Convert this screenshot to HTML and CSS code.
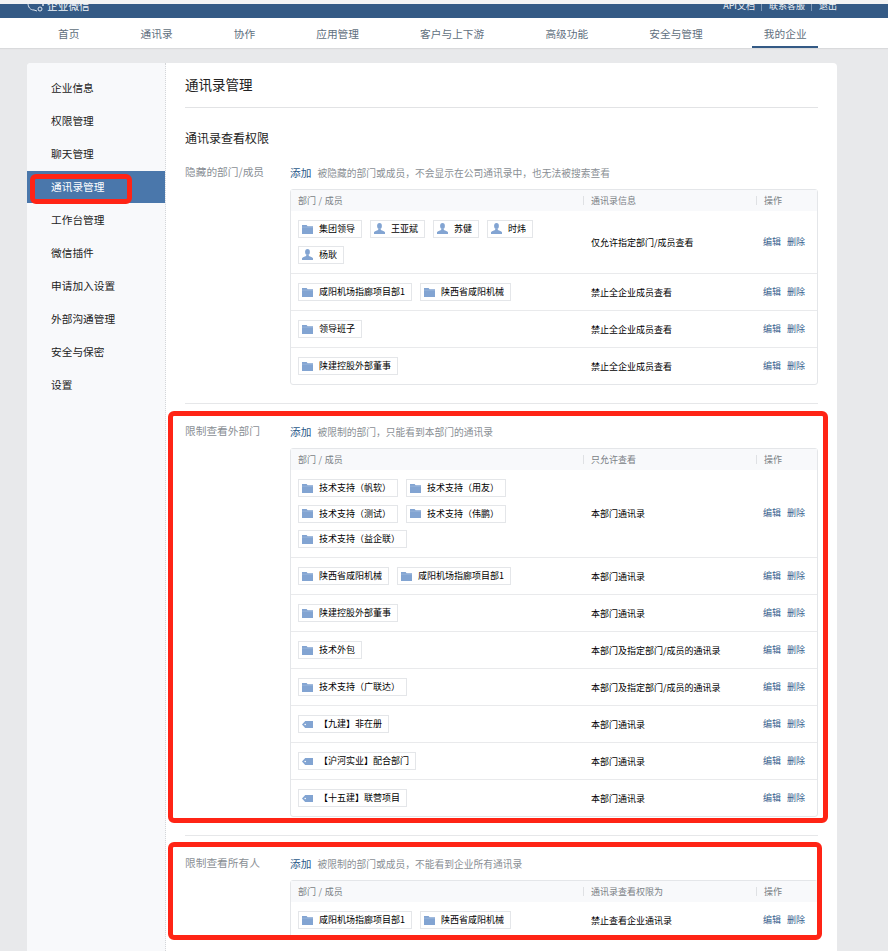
FILE: index.html
```html
<!DOCTYPE html>
<html lang="zh-CN">
<head>
<meta charset="utf-8">
<title>通讯录管理</title>
<link rel="stylesheet" href="styles.css">
</head>
<body>
<svg class="defs" width="0" height="0" aria-hidden="true">
  <symbol id="i-folder" viewBox="0 0 11 9"><path d="M0 0h4.600l1 1.300H11V9H0z" fill="#82a4d2"/><path d="M0 2.200h11" stroke="#a5bfe0" stroke-width=".6"/></symbol>
  <symbol id="i-user" viewBox="0 0 11 11"><ellipse cx="5.500" cy="2.900" rx="2.400" ry="2.900" fill="#82a4d2"/><path d="M4.400 5.600h2.200l.3 1.300c1.600.6 3.400 1.200 4.100 2.400V11H0V9.300c.7-1.200 2.500-1.800 4.100-2.400z" fill="#82a4d2"/></symbol>
  <symbol id="i-tag" viewBox="0 0 11 7"><path d="M3.200 0H11v7H3.200L0 3.500z" fill="#82a4d2"/><circle cx="3.200" cy="3.500" r=".8" fill="#fff"/></symbol>
</svg>

<div class="top-band"></div>
<header class="topbar">
  <div class="brand">
    <svg class="brand-icon" viewBox="0 0 18 12" aria-hidden="true"><path d="M1 1c0 4 2 7 6 7l3 1" fill="none" stroke="#dfe6ef" stroke-width="1"/><circle cx="13" cy="7" r="2" fill="none" stroke="#dfe6ef"/><circle cx="16" cy="3" r="1" fill="#dfe6ef"/></svg>
    <span>企业微信</span>
  </div>
  <nav class="toplinks"><a>API文档</a><i></i><a>联系客服</a><i></i><a>退出</a></nav>
</header>
<nav class="mainnav">
  <a>首页</a><a>通讯录</a><a>协作</a><a>应用管理</a><a>客户与上下游</a><a>高级功能</a><a>安全与管理</a><a class="on">我的企业</a>
</nav>

<div class="page">
  <div class="card">
    <aside class="side">
      <a>企业信息</a><a>权限管理</a><a>聊天管理</a><a class="on">通讯录管理</a><a>工作台管理</a><a>微信插件</a><a>申请加入设置</a><a>外部沟通管理</a><a>安全与保密</a><a>设置</a>
    </aside>
    <main class="content">
      <h1 class="title">通讯录管理</h1>
      <h2 class="subtitle">通讯录查看权限</h2>

      <section class="sec first">
        <div class="sec-label">隐藏的部门/成员</div>
        <div class="sec-body">
          <div class="sec-head"><a class="add">添加</a><span class="desc">被隐藏的部门或成员，不会显示在公司通讯录中，也无法被搜索查看</span></div>
          <div class="tbl">
            <div class="row head"><div class="h1">部门 / 成员</div><div class="hc"><span>通讯录信息</span></div><div class="hc"><span>操作</span></div></div>
            <div class="row">
              <div class="tags">
                <span class="tag"><svg class="ic f"><use href="#i-folder"/></svg>集团领导</span>
                <span class="tag"><svg class="ic u"><use href="#i-user"/></svg>王亚斌</span>
                <span class="tag"><svg class="ic u"><use href="#i-user"/></svg>苏健</span>
                <span class="tag"><svg class="ic u"><use href="#i-user"/></svg>时炜</span>
                <span class="tag"><svg class="ic u"><use href="#i-user"/></svg>杨耿</span>
              </div>
              <div class="info">仅允许指定部门/成员查看</div>
              <div class="ops"><a>编辑</a><a>删除</a></div>
            </div>
            <div class="row">
              <div class="tags">
                <span class="tag"><svg class="ic f"><use href="#i-folder"/></svg>咸阳机场指廊项目部1</span>
                <span class="tag"><svg class="ic f"><use href="#i-folder"/></svg>陕西省咸阳机械</span>
              </div>
              <div class="info">禁止全企业成员查看</div>
              <div class="ops"><a>编辑</a><a>删除</a></div>
            </div>
            <div class="row">
              <div class="tags"><span class="tag"><svg class="ic f"><use href="#i-folder"/></svg>领导班子</span></div>
              <div class="info">禁止全企业成员查看</div>
              <div class="ops"><a>编辑</a><a>删除</a></div>
            </div>
            <div class="row">
              <div class="tags"><span class="tag"><svg class="ic f"><use href="#i-folder"/></svg>陕建控股外部董事</span></div>
              <div class="info">禁止全企业成员查看</div>
              <div class="ops"><a>编辑</a><a>删除</a></div>
            </div>
          </div>
        </div>
      </section>

      <section class="sec">
        <div class="sec-label">限制查看外部门</div>
        <div class="sec-body">
          <div class="sec-head"><a class="add">添加</a><span class="desc">被限制的部门，只能看到本部门的通讯录</span></div>
          <div class="tbl">
            <div class="row head"><div class="h1">部门 / 成员</div><div class="hc"><span>只允许查看</span></div><div class="hc"><span>操作</span></div></div>
            <div class="row">
              <div class="tags three">
                <span class="tag"><svg class="ic f"><use href="#i-folder"/></svg>技术支持（帆软）</span>
                <span class="tag"><svg class="ic f"><use href="#i-folder"/></svg>技术支持（用友）</span>
                <span class="tag"><svg class="ic f"><use href="#i-folder"/></svg>技术支持（测试）</span>
                <span class="tag"><svg class="ic f"><use href="#i-folder"/></svg>技术支持（伟鹏）</span>
                <span class="tag"><svg class="ic f"><use href="#i-folder"/></svg>技术支持（益企联）</span>
              </div>
              <div class="info">本部门通讯录</div>
              <div class="ops"><a>编辑</a><a>删除</a></div>
            </div>
            <div class="row">
              <div class="tags">
                <span class="tag"><svg class="ic f"><use href="#i-folder"/></svg>陕西省咸阳机械</span>
                <span class="tag"><svg class="ic f"><use href="#i-folder"/></svg>咸阳机场指廊项目部1</span>
              </div>
              <div class="info">本部门通讯录</div>
              <div class="ops"><a>编辑</a><a>删除</a></div>
            </div>
            <div class="row">
              <div class="tags"><span class="tag"><svg class="ic f"><use href="#i-folder"/></svg>陕建控股外部董事</span></div>
              <div class="info">本部门通讯录</div>
              <div class="ops"><a>编辑</a><a>删除</a></div>
            </div>
            <div class="row">
              <div class="tags"><span class="tag"><svg class="ic f"><use href="#i-folder"/></svg>技术外包</span></div>
              <div class="info">本部门及指定部门/成员的通讯录</div>
              <div class="ops"><a>编辑</a><a>删除</a></div>
            </div>
            <div class="row">
              <div class="tags"><span class="tag"><svg class="ic f"><use href="#i-folder"/></svg>技术支持（广联达）</span></div>
              <div class="info">本部门及指定部门/成员的通讯录</div>
              <div class="ops"><a>编辑</a><a>删除</a></div>
            </div>
            <div class="row">
              <div class="tags"><span class="tag"><svg class="ic t"><use href="#i-tag"/></svg>【九建】非在册</span></div>
              <div class="info">本部门通讯录</div>
              <div class="ops"><a>编辑</a><a>删除</a></div>
            </div>
            <div class="row">
              <div class="tags"><span class="tag"><svg class="ic t"><use href="#i-tag"/></svg>【沪河实业】配合部门</span></div>
              <div class="info">本部门通讯录</div>
              <div class="ops"><a>编辑</a><a>删除</a></div>
            </div>
            <div class="row">
              <div class="tags"><span class="tag"><svg class="ic t"><use href="#i-tag"/></svg>【十五建】联营项目</span></div>
              <div class="info">本部门通讯录</div>
              <div class="ops"><a>编辑</a><a>删除</a></div>
            </div>
          </div>
        </div>
      </section>

      <section class="sec">
        <div class="sec-label">限制查看所有人</div>
        <div class="sec-body">
          <div class="sec-head"><a class="add">添加</a><span class="desc">被限制的部门或成员，不能看到企业所有通讯录</span></div>
          <div class="tbl">
            <div class="row head"><div class="h1">部门 / 成员</div><div class="hc"><span>通讯录查看权限为</span></div><div class="hc"><span>操作</span></div></div>
            <div class="row">
              <div class="tags">
                <span class="tag"><svg class="ic f"><use href="#i-folder"/></svg>咸阳机场指廊项目部1</span>
                <span class="tag"><svg class="ic f"><use href="#i-folder"/></svg>陕西省咸阳机械</span>
              </div>
              <div class="info">禁止查看企业通讯录</div>
              <div class="ops"><a>编辑</a><a>删除</a></div>
            </div>
          </div>
        </div>
      </section>
    </main>
  </div>
</div>

<div class="mark mark-side"></div>
<div class="mark mark-dept"></div>
<div class="mark mark-all"></div>
</body>
</html>
```
FILE: styles.css
```css
* { box-sizing: border-box; }
html, body { margin: 0; height: 951px; overflow: hidden; }
body {
  position: relative;
  background: #e8e9eb;
  font-family: "Noto Sans CJK SC", "Noto Sans", sans-serif;
  color: #222;
}
a { cursor: pointer; }
.defs { position: absolute; }

.top-band { height: 4px; background: #f3f3f3; }
.topbar {
  height: 14px;
  background: #345a85;
  overflow: hidden;
  display: flex;
  justify-content: space-between;
  padding: 0 51px 0 27px;
  color: #eef2f7;
  font-size: 10.700px;
  line-height: 14px;
}
.brand, .toplinks { display: flex; align-items: center; height: 14px; margin-top: -5px; }
.brand-icon { width: 18px; height: 12px; margin-top: 4px; margin-right: 2px; }
.toplinks i { width: 1px; height: 9px; background: #7d97b6; margin: 0 6.500px; }
.toplinks { margin-top: -5px; font-size: 9px; }

.mainnav {
  height: 30px;
  background: #fff;
  display: flex;
  gap: 37.950px;
  padding-left: 46.400px;
  box-shadow: 0 1px 1px #d9dadc;
  font-size: 10.700px;
  color: #5f6f80;
}
.mainnav a {
  display: flex;
  align-items: center;
  padding: 0 11.600px;
  border-bottom: 2px solid transparent;
  padding-top: 2px;
}
.mainnav a.on { border-bottom-color: #345a85; }

.page { padding: 15px 0 0 27px; }
.card {
  width: 810px;
  min-height: 1000px;
  background: #fff;
  border-radius: 4px;
  display: flex;
  overflow: hidden;
}
.side {
  width: 139px;
  flex: none;
  background: #f8f9fb;
  border-right: 1px dotted #d4d6d9;
  padding-top: 8px;
}
.side a {
  display: block;
  height: 33px;
  line-height: 33px;
  padding-left: 24px;
  font-size: 10.700px;
  color: #222;
}
.side a.on { background: #4a77ab; background-clip: padding-box; border-top: 1px solid transparent; line-height: 31px; color: #fff; }

.content { flex: 1; padding: 0 19px 0 19px; min-width: 0; }
.title {
  margin: 0;
  padding: 11px 0 13px;
  height: 45px;
  border-bottom: 1px solid #e2e3e5;
  font-size: 13.500px;
  line-height: 20px;
  font-weight: 400;
  color: #222;
}
.subtitle {
  margin: 21px 0 18px;
  font-size: 12px;
  line-height: 17px;
  font-weight: 400;
  color: #222;
}

.sec {
  display: grid;
  grid-template-columns: 105px 528px;
  border-top: 1px solid #e6e7e9;
  margin-top: 18px;
  padding-top: 19px;
}
.sec.first { border-top: 0; margin-top: 0; padding-top: 0; }
.sec-label { font-size: 10.700px; line-height: 16px; color: #8a8f95; }
.sec-head { display: flex; align-items: center; gap: 6px; height: 17px; margin-bottom: 8px; }
.add { font-size: 10.700px; color: #2b5a8a; }
.desc { font-size: 9.750px; color: #8a8f95; }

.tbl { border: 1px solid #e4e6e9; border-radius: 3px; }
.row {
  display: grid;
  grid-template-columns: 292px 173px 61px;
  align-items: center;
  border-top: 1px solid #e9eaec;
  font-size: 9px;
}
.row.head, .row.head + .row { border-top: 0; }
.row.head { height: 21px; background: #f8f9fb; color: #7a7f85; }
.h1 { padding-left: 7px; word-spacing: 0.600px; }
.hc span { display: block; border-left: 1px solid #dfe1e4; padding-left: 7px; line-height: 9px; }

.tags { display: flex; flex-wrap: wrap; gap: 8px; padding: 9px 0 9px 7px; }
.tags.three { row-gap: 7.500px; }
.tag {
  display: inline-flex;
  align-items: center;
  height: 18px;
  border: 1px solid #e4e6e9;
  padding: 0 6px 0 3px;
  color: #000;
  line-height: 16px;
  white-space: nowrap;
}
.ic { width: 11px; flex: none; margin-right: 6px; }
.ic.f { height: 9px; }
.ic.u { height: 11px; margin-top: -2px; }
.ic.t { height: 7px; }

.info { padding-left: 8px; color: #000; }
.ops { display: flex; gap: 6px; padding: 0 0 2px 7px; color: #34608d; }

.mark {
  position: absolute;
  border: 5px solid #ff2415;
  border-radius: 6px;
  pointer-events: none;
}
.mark-side { left: 30px; top: 174px; width: 102px; height: 30px; }
.mark-dept { left: 168px; top: 411px; width: 660px; height: 412px; }
.mark-all { left: 168px; top: 842px; width: 654px; height: 98px; }
```
